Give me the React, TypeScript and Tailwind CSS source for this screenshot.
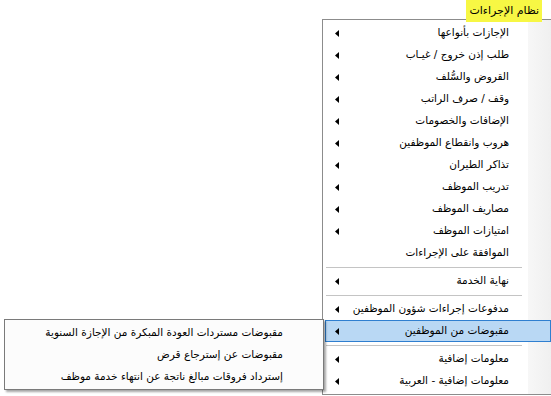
type MenuItem = { label: string; sub?: boolean; active?: boolean } | 'sep'

const mainItems: MenuItem[] = [
  { label: 'الإجازات بأنواعها', sub: true },
  { label: 'طلب إذن خروج / غيـاب', sub: true },
  { label: 'القروض والسُّلف', sub: true },
  { label: 'وقف / صرف الراتب', sub: true },
  { label: 'الإضافات والخصومات', sub: true },
  { label: 'هروب وانقطاع الموظفين', sub: true },
  { label: 'تذاكر الطيران', sub: true },
  { label: 'تدريب الموظف', sub: true },
  { label: 'مصاريف الموظف', sub: true },
  { label: 'امتيازات الموظف', sub: true },
  { label: 'الموافقة على الإجراءات' },
  'sep',
  { label: 'نهاية الخدمة', sub: true },
  'sep',
  { label: 'مدفوعات إجراءات شؤون الموظفين', sub: true },
  { label: 'مقبوضات من الموظفين', sub: true, active: true },
  'sep',
  { label: 'معلومات إضافية', sub: true },
  { label: 'معلومات إضافية - العربية', sub: true }
]

const subItems = [
  'مقبوضات مستردات العودة المبكرة من الإجازة السنوية',
  'مقبوضات عن إسترجاع قرض',
  'إسترداد فروقات مبالغ ناتجة عن انتهاء خدمة موظف'
]

function Arrow() {
  return (
    <svg width="4" height="7" viewBox="0 0 4 7" className="block">
      <path d="M4 0 L0 3.5 L4 7 Z" fill="#000" />
    </svg>
  )
}

export default function App() {
  return (
    <div
      className="relative h-[396px] w-[551px] overflow-hidden bg-white text-[10.5px] text-black"
      style={{ fontFamily: '"DejaVu Sans", Tahoma, sans-serif' }}
    >
      <div className="flex justify-end pr-[9px]">
        <div
          className="relative z-10 flex h-[22px] items-center whitespace-nowrap bg-[#f7f744] px-[3px] text-[11px]"
          dir="rtl"
        >
          نظام الإجراءات
        </div>
      </div>

      {/* main dropdown */}
      <div className="absolute left-[322px] top-[19px] w-[232px] border border-[#8c8c8c] bg-white py-[2px]">
        <div className="absolute bottom-0 right-0 top-0 w-[25px] bg-gradient-to-r from-[#f7f7f7] to-[#efefef]" />
        {mainItems.map((item, i) =>
          item === 'sep' ? (
            <div key={`sep-${i}`} className="relative flex h-[6px] items-center pl-[3px] pr-[31px]">
              <div className="h-px w-full bg-[#c4c4c4]" />
            </div>
          ) : (
            <div
              key={item.label}
              className={`relative mx-[2px] flex h-[22px] items-center justify-between border pl-[9px] pr-[41px] ${
                item.active ? 'border-[#2f7fd0] bg-[#b9d8f4]' : 'border-transparent'
              }`}
            >
              <span className="w-[4px]">{item.sub && <Arrow />}</span>
              <span dir="rtl" className="whitespace-nowrap">
                {item.label}
              </span>
            </div>
          )
        )}
      </div>

      {/* submenu */}
      <div className="absolute left-[4px] top-[319px] w-[320px] border border-[#7a7a7a] bg-[#fcfcfc] pb-[1px] pt-[2px] shadow-[2px_2px_2px_rgba(0,0,0,0.35)]">
        {subItems.map((label) => (
          <div key={label} className="flex h-[22px] items-center justify-end pr-[40px]">
            <span dir="rtl" className="whitespace-nowrap">
              {label}
            </span>
          </div>
        ))}
      </div>
    </div>
  )
}
